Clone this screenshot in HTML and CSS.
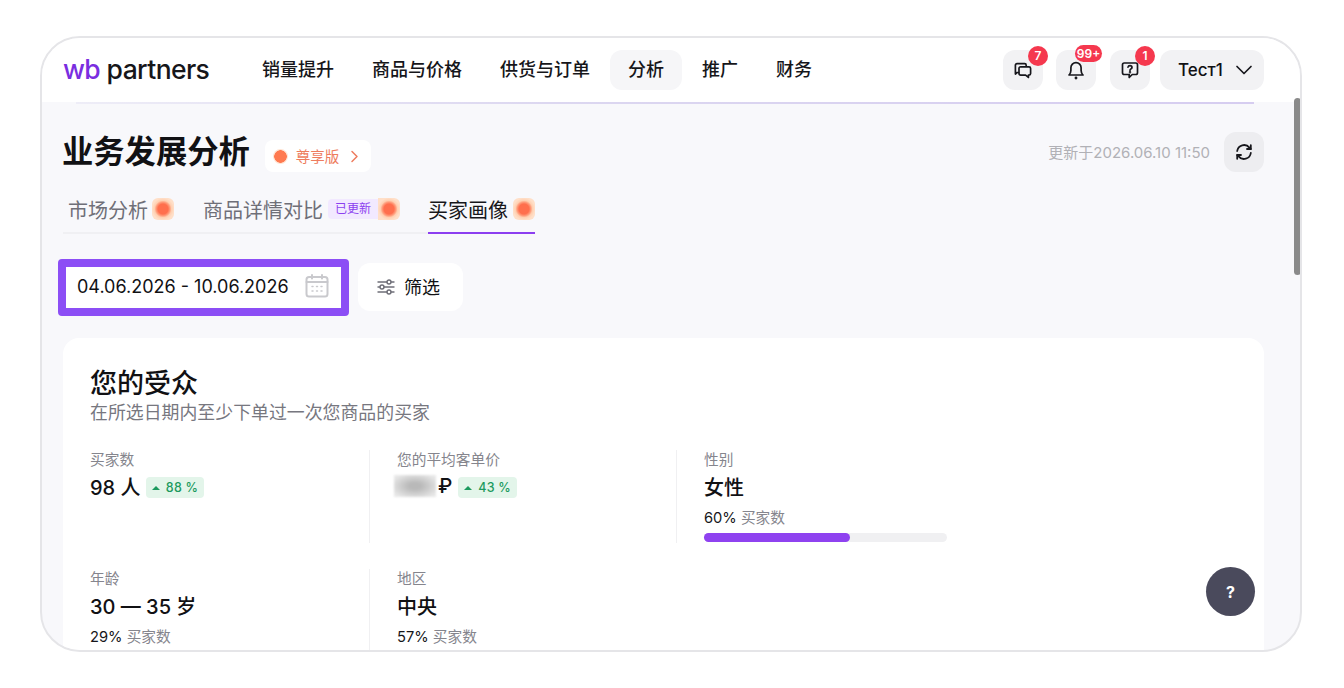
FILE: index.html
```html
<!DOCTYPE html>
<html lang="zh">

<head>
    <title>业务发展分析</title>
    <meta charset="utf-8">
    <meta name="viewport" content="width=device-width, initial-scale=1">
    <link rel="stylesheet" href="styles.css">
</head>

<body>
    <div class="frame">
        <header class="header">
            <div class="logo"><span class="logo-wb">wb</span> partners</div>
            <nav class="nav">
                <a class="nav-item">销量提升</a>
                <a class="nav-item">商品与价格</a>
                <a class="nav-item">供货与订单</a>
                <a class="nav-item active">分析</a>
                <a class="nav-item">推广</a>
                <a class="nav-item">财务</a>
            </nav>
            <div class="actions">
                <button class="icon-btn">
                    <svg width="20" height="20" viewBox="0 0 20 20" fill="none" stroke="#17171c" stroke-width="1.700" stroke-linejoin="round" stroke-linecap="round">
                        <path d="M5.5 12.5H4.2L2.4 14V5.2c0-.9.7-1.6 1.6-1.6h7.6c.9 0 1.6.7 1.6 1.6V6" />
                        <path d="M7.6 6.8h8.4c.9 0 1.6.7 1.6 1.6v5.2c0 .9-.7 1.6-1.6 1.6h-.6v2.2l-2.8-2.2H7.6c-.9 0-1.6-.7-1.6-1.6V8.4c0-.9.7-1.6 1.6-1.6z" />
                    </svg>
                    <span class="badge">7</span>
                </button>
                <button class="icon-btn">
                    <svg width="20" height="20" viewBox="0 0 20 20" fill="none" stroke="#17171c" stroke-width="1.700" stroke-linejoin="round" stroke-linecap="round">
                        <path d="M3 15h14c-1.2-1.2-1.9-2.4-1.9-4.4V7.8A5.1 5.1 0 0 0 10 2.6a5.1 5.1 0 0 0-5.1 5.2v2.8C4.900 12.600 4.200 13.800 3 15z" />
                        <circle cx="10" cy="18" r=".6" fill="#17171c" />
                    </svg>
                    <span class="badge wide">99+</span>
                </button>
                <button class="icon-btn">
                    <svg width="20" height="20" viewBox="0 0 20 20" fill="none" stroke="#17171c" stroke-width="1.700" stroke-linejoin="round" stroke-linecap="round">
                        <path d="M4.200 3h11.600c1 0 1.700.7 1.700 1.700v8.100c0 1-.7 1.700-1.700 1.700h-3.600L9.200 17.500v-3H4.200c-1 0-1.700-.7-1.700-1.700V4.700C2.500 3.700 3.200 3 4.200 3z" />
                        <path d="M8 7.200c.2-1 1-1.500 2-1.500 1.100 0 2 .7 2 1.700 0 1.500-2 1.500-2 2.900" />
                        <circle cx="10" cy="12.300" r=".4" fill="#17171c" />
                    </svg>
                    <span class="badge">1</span>
                </button>
                <button class="user-btn">
                    <span>Тест1</span>
                    <svg width="18" height="10" viewBox="0 0 18 10" fill="none" stroke="#17171c" stroke-width="1.700" stroke-linecap="round" stroke-linejoin="round">
                        <path d="M2 1.500l7 7 7-7" />
                    </svg>
                </button>
            </div>
        </header>
        <div class="header-line"></div>

        <main class="main">
            <div class="top-row">
                <h1 class="page-title">业务发展分析</h1>
                <a class="plan">
                    <span class="plan-dot"></span>
                    <span class="plan-text">尊享版</span>
                    <svg width="9" height="13" viewBox="0 0 9 13" fill="none" stroke="#ee7c5e" stroke-width="1.500" stroke-linecap="round" stroke-linejoin="round">
                        <path d="M2 1.500l5 5-5 5" />
                    </svg>
                </a>
                <span class="updated">更新于2026.06.10 11:50</span>
                <button class="refresh-btn">
                    <svg width="18" height="18" viewBox="0 0 18 18" fill="none" stroke="#17171c" stroke-width="1.800" stroke-linecap="round" stroke-linejoin="round">
                        <path d="M2.200 8A6.900 6.900 0 0 1 14.400 4.600L15.800 6" />
                        <path d="M15.800 2.200V6h-3.800" />
                        <path d="M15.800 10A6.900 6.900 0 0 1 3.600 13.400L2.200 12" />
                        <path d="M2.200 15.800V12H6" />
                    </svg>
                </button>
            </div>

            <div class="tabs">
                <a class="tab">市场分析<span class="pulse"></span></a>
                <a class="tab">商品详情对比<span class="tag">已更新</span><span class="pulse tight"></span></a>
                <a class="tab active">买家画像<span class="pulse"></span></a>
            </div>

            <div class="filters">
                <div class="date-box">
                    <span class="date-text">04.06.2026 - 10.06.2026</span>
                    <svg class="date-icon" width="24" height="24" viewBox="0 0 24 24" fill="none" stroke="#c9c9cd" stroke-width="2" stroke-linecap="round">
                        <rect x="1.500" y="3" width="21" height="19.500" rx="2.500" />
                        <path d="M1.500 8h21M7 1v3.500M17 1v3.500" />
                        <path stroke-width="1.500" d="M7 12.500h1M11.500 12.500h1M16 12.500h1M7 17h1M11.500 17h1M16 17h1" />
                    </svg>
                </div>
                <button class="filter-btn">
                    <svg width="18" height="16" viewBox="0 0 18 16" fill="none" stroke="#6f6f78" stroke-width="1.400" stroke-linecap="round">
                        <path d="M1 3h9M14 3h3M1 8h2M7 8h10M1 13h9M14 13h3" />
                        <circle cx="12" cy="3" r="2" />
                        <circle cx="5" cy="8" r="2" />
                        <circle cx="12" cy="13" r="2" />
                    </svg>
                    <span class="filter-text">筛选</span>
                </button>
            </div>

            <section class="card">
                <h2 class="card-title">您的受众</h2>
                <p class="card-sub">在所选日期内至少下单过一次您商品的买家</p>
                <div class="metrics">
                    <div class="metric">
                        <div class="metric-label">买家数</div>
                        <div class="metric-value">98 人 <span class="chip"><i class="up"></i>88 %</span></div>
                    </div>
                    <div class="metric">
                        <div class="metric-label">您的平均客单价</div>
                        <div class="metric-value"><span class="blurred"></span><span class="rub">₽</span><span class="chip"><i class="up"></i>43 %</span></div>
                    </div>
                    <div class="metric">
                        <div class="metric-label">性别</div>
                        <div class="metric-value">女性</div>
                        <div class="metric-note"><b>60%</b> 买家数</div>
                        <div class="progress">
                            <div class="progress-fill" style="width: 60%"></div>
                        </div>
                    </div>
                    <div class="metric">
                        <div class="metric-label">年龄</div>
                        <div class="metric-value">30 — 35 岁</div>
                        <div class="metric-note"><b>29%</b> 买家数</div>
                    </div>
                    <div class="metric">
                        <div class="metric-label">地区</div>
                        <div class="metric-value">中央</div>
                        <div class="metric-note"><b>57%</b> 买家数</div>
                    </div>
                </div>
            </section>
        </main>

        <div class="scrollbar"></div>
        <button class="help-btn">?</button>
    </div>
</body>

</html>
```

FILE: styles.css
```css
* {
    margin: 0;
    padding: 0;
    box-sizing: border-box;
}

body {
    background-color: #fff;
    color: #111114;
    font-family: Inter, "Noto Sans CJK SC", sans-serif;
    height: 688px;
    overflow: hidden;
    padding: 36px 0 0 40px;
}

button {
    border: none;
    font-family: inherit;
    color: inherit;
}

.frame {
    position: relative;
    width: 1262px;
    height: 616px;
    border: 2px solid #e5e5e8;
    border-radius: 40px;
    overflow: hidden;
    background-color: #f8f8fb;
    display: flex;
    flex-direction: column;
}

/* Header */
.header {
    display: flex;
    align-items: center;
    height: 64px;
    flex-shrink: 0;
    padding: 0 36px 0 21px;
    background-color: #fff;
}

.logo {
    width: 181px;
    margin-top: -3px;
    font-size: 26.500px;
    font-weight: 500;
    letter-spacing: -0.6px;
    color: #16161a;
}

.logo-wb {
    color: #7a2ee0;
}

.nav {
    display: flex;
    gap: 2px;
}

.nav-item {
    height: 40px;
    padding: 0 18px;
    border-radius: 12px;
    font-size: 18px;
    font-weight: 500;
    line-height: 40px;
    color: #16161a;
}

.nav-item.active {
    background-color: #f6f6f8;
}

.actions {
    display: flex;
    align-items: center;
    margin-left: auto;
}

.icon-btn {
    position: relative;
    display: flex;
    align-items: center;
    justify-content: center;
    width: 40px;
    height: 40px;
    margin-right: 13px;
    border-radius: 12px;
    background-color: #f2f2f4;
}

.icon-btn:nth-child(2) {
    margin-right: 14px;
}

.icon-btn:nth-child(3) {
    margin-right: 10px;
}

.badge {
    position: absolute;
    top: -4px;
    right: -5px;
    min-width: 20px;
    height: 20px;
    border-radius: 10px;
    background-color: #f5384e;
    color: #fff;
    font-size: 12px;
    font-weight: 600;
    line-height: 20px;
    text-align: center;
}

.badge.wide {
    top: -5px;
    right: -6px;
    width: 27px;
    min-width: 27px;
    height: 17px;
    font-size: 12px;
    line-height: 17px;
}

.user-btn {
    display: flex;
    align-items: center;
    justify-content: space-between;
    width: 104px;
    height: 40px;
    padding: 0 11px 0 18px;
    border-radius: 12px;
    background-color: #f2f2f4;
    font-size: 17px;
    font-weight: 500;
}

.header-line {
    flex-shrink: 0;
    height: 2px;
    margin: 0 46px 0 34px;
    background: linear-gradient(to right, #eeedf7, #dcd7f0 40%, #d6cdf0);
}

/* Main */
.main {
    flex: 1;
    padding: 28px 36px 0 21px;
}

.top-row {
    display: flex;
    align-items: center;
    height: 40px;
}

.page-title {
    margin-left: -1px;
    font-size: 31.300px;
    font-weight: 700;
    line-height: 40px;
}

.plan {
    display: flex;
    align-items: center;
    gap: 8px;
    height: 32px;
    margin: 8px 0 0 15px;
    padding: 0 12px 0 8px;
    border-radius: 8px;
    background-color: #fff;
    color: #ee7c5e;
    font-size: 14.500px;
}

.plan-text {
    margin-top: -2px;
}

.plan svg {
    margin-left: 3px;
}

.plan-dot {
    width: 15px;
    height: 15px;
    border-radius: 50%;
    background: radial-gradient(circle, #ff7a50 0 6px, #ffe3d2 6.5px);
}

.updated {
    margin: -2px 0 0 auto;
    color: #b1b1b6;
    font-size: 15px;
}

.refresh-btn {
    display: flex;
    align-items: center;
    justify-content: center;
    width: 40px;
    height: 40px;
    margin-left: 14px;
    border-radius: 12px;
    background-color: #ededf0;
}

/* Tabs */
.tabs {
    display: flex;
    width: 472px;
    height: 40px;
    margin-top: 22px;
    border-bottom: 2px solid #f0f0f3;
    gap: 24px;
}

.tab {
    display: flex;
    align-items: center;
    height: 40px;
    padding: 0 0 10px 5px;
    color: #6f6f78;
    font-size: 20px;
    white-space: nowrap;
}

.tab.active {
    margin-left: 4px;
    padding-left: 0;
    padding-bottom: 8px;
    border-bottom: 2px solid #8c3ff0;
    color: #16161a;
}

.pulse {
    width: 22px;
    height: 22px;
    margin-left: 4px;
    border-radius: 6px;
    background: radial-gradient(circle, #ff6f4d 0 5px, #ff9f7e 7px, #ffcfb0 8.500px, #ffdfc8 11px);
}

.tab.active .pulse {
    margin-left: 5px;
}

.pulse.tight {
    margin-left: 0;
    border-radius: 0 6px 6px 0;
}

.tag {
    height: 20px;
    margin-left: 5px;
    padding: 0 7px;
    border-radius: 4px 0 0 4px;
    background-color: #f2e9ff;
    color: #8c3ff0;
    font-size: 12px;
    line-height: 20px;
}

/* Filters */
.filters {
    display: flex;
    align-items: flex-start;
    gap: 9px;
    margin: 25px 0 0 -5px;
}

.date-box {
    display: flex;
    align-items: center;
    justify-content: space-between;
    width: 291px;
    height: 57px;
    padding: 0 12px 2px 11px;
    border: 8px solid #8c4ef5;
    border-radius: 4px;
    background-color: #fff;
}

.date-text {
    font-size: 18px;
    white-space: nowrap;
}

.date-icon {
    margin-top: -2px;
}

.filter-btn {
    display: flex;
    align-items: center;
    gap: 9px;
    width: 105px;
    height: 48px;
    margin-top: 4px;
    padding-left: 19px;
    border-radius: 12px;
    background-color: #fff;
    font-size: 18px;
}

.filter-text {
    margin-top: -3px;
}

/* Audience card */
.card {
    height: 400px;
    margin-top: 22px;
    padding: 27px 27px 0;
    border-radius: 16px;
    background-color: #fff;
}

.card-title {
    font-size: 27px;
    font-weight: 500;
    line-height: 37px;
}

.card-sub {
    color: #77777f;
    font-size: 17.900px;
    line-height: 22px;
}

.metrics {
    display: grid;
    grid-template-columns: 279px 307px 307px;
    grid-auto-rows: 93px;
    row-gap: 26px;
    margin-top: 26px;
}

.metric {
    padding-left: 27px;
    border-left: 1px solid #f0f0f2;
}

.metric:nth-child(3n + 1) {
    padding-left: 0;
    border-left: none;
}

.metric-label {
    color: #85858d;
    font-size: 14.700px;
    line-height: 20px;
}

.metric-value {
    display: flex;
    align-items: center;
    height: 28px;
    margin-top: 2px;
    font-size: 20px;
    font-weight: 500;
    white-space: pre;
}

.metric-note {
    margin-top: 8px;
    color: #85858d;
    font-size: 14.700px;
    line-height: 20px;
}

.metric-note b {
    color: #16161a;
    font-weight: 400;
}

.chip {
    display: inline-flex;
    align-items: center;
    gap: 6px;
    height: 21px;
    margin: 3px 0 0;
    padding: 0 6px;
    border-radius: 4px;
    background-color: #e3f5ea;
    color: #1c9a5e;
    font-size: 12.500px;
    font-weight: 500;
    letter-spacing: 0.2px;
}

.up {
    width: 0;
    height: 0;
    border-left: 4px solid transparent;
    border-right: 4px solid transparent;
    border-bottom: 4px solid #1c9a5e;
}

.blurred {
    width: 42px;
    height: 22px;
    margin: 0 2px 0 -3px;
    background: radial-gradient(ellipse at center, #b9b9b9 20%, #e8e8e8 85%);
    filter: blur(1px);
}

.rub {
    margin-right: 6px;
}

.progress {
    width: 243px;
    height: 9px;
    margin-top: 5px;
    border-radius: 5px;
    background-color: #f0f0f2;
}

.progress-fill {
    height: 100%;
    border-radius: 5px;
    background-color: #8f42f0;
}

/* Things over the page */
.scrollbar {
    position: absolute;
    top: 60px;
    right: -1px;
    width: 7px;
    height: 177px;
    border-radius: 4px;
    background-color: #8a8a8a;
}

.help-btn {
    position: absolute;
    top: 529px;
    left: 1164px;
    width: 49px;
    height: 49px;
    border-radius: 50%;
    background-color: #4a4a5c;
    color: #fff;
    font-size: 16px;
    font-weight: 700;
}
```
